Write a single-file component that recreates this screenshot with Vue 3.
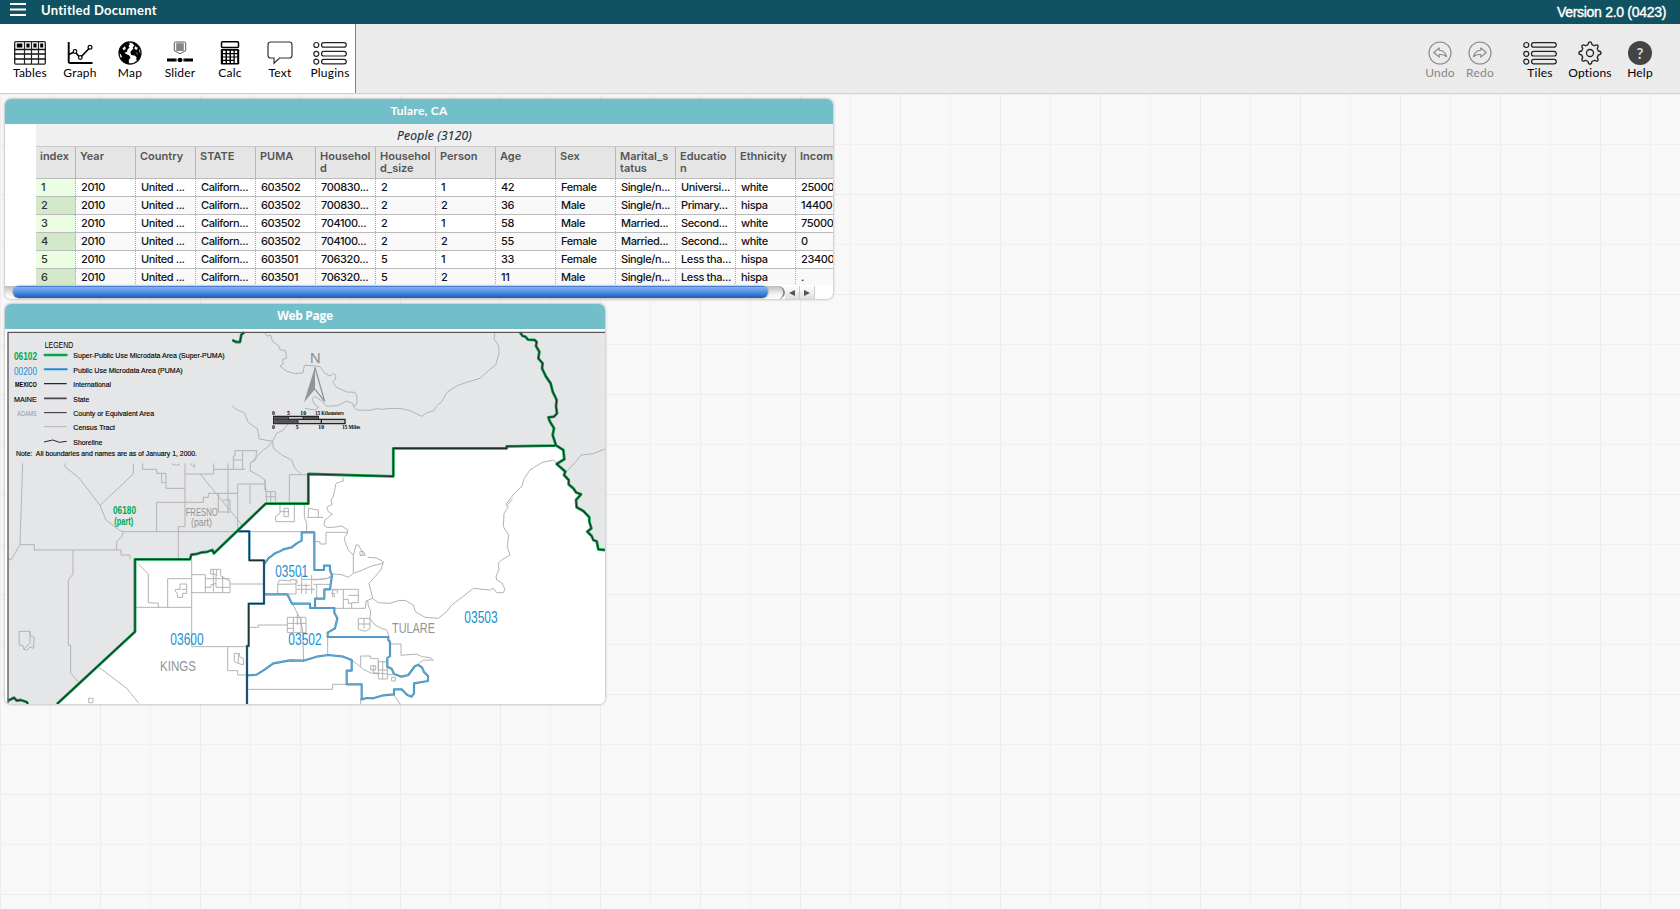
<script setup>
const columns = [
  'index', 'Year', 'Country', 'STATE', 'PUMA', 'Household', 'Household_size', 'Person',
  'Age', 'Sex', 'Marital_status', 'Education', 'Ethnicity', 'Income'
]
const rows = [
  ['1', '2010', 'United ...', 'Californ...', '603502', '700830...', '2', '1', '42', 'Female', 'Single/n...', 'Universi...', 'white', '25000'],
  ['2', '2010', 'United ...', 'Californ...', '603502', '700830...', '2', '2', '36', 'Male', 'Single/n...', 'Primary...', 'hispa', '14400'],
  ['3', '2010', 'United ...', 'Californ...', '603502', '704100...', '2', '1', '58', 'Male', 'Married...', 'Second...', 'white', '75000'],
  ['4', '2010', 'United ...', 'Californ...', '603502', '704100...', '2', '2', '55', 'Female', 'Married...', 'Second...', 'white', '0'],
  ['5', '2010', 'United ...', 'Californ...', '603501', '706320...', '5', '1', '33', 'Female', 'Single/n...', 'Less tha...', 'hispa', '23400'],
  ['6', '2010', 'United ...', 'Californ...', '603501', '706320...', '5', '2', '11', 'Male', 'Single/n...', 'Less tha...', 'hispa', '.']
]
const breaks = { Household: ['Househol', 'd'], Household_size: ['Househol', 'd_size'], Marital_status: ['Marital_s', 'tatus'], Education: ['Educatio', 'n'] }
const headLines = (c) => breaks[c] || [c]
const legend = [
  { y: 174, text: 'Super-Public Use Microdata Area (Super-PUMA)', w: 454 },
  { y: 218, text: 'Public Use Microdata Area (PUMA)', w: 328 },
  { y: 261, text: 'International', w: 113 },
  { y: 305, text: 'State', w: 48 },
  { y: 347, text: 'County or Equivalent Area', w: 242 },
  { y: 390, text: 'Census Tract', w: 125 },
  { y: 434, text: 'Shoreline', w: 87 }
]

const superPuma = 'M171 1212 405 995V778H570L574 764 590 762 606 757 620 756 637 750 642 760 797 611H925V522L1180 529V445H1520V439L1665 437' +
  'M1560 97 1568 108 1576 110 1584 119 1604 120 1610 126 1608 138 1618 155 1615 175 1628 190 1626 205 1638 230 1652 250 1658 275 1670 300 1668 318 1671 340 1662 350 1645 352 1650 365 1662 385 1658 405 1668 436' +
  ' 1690 450 1693 478 1683 484 1670 492 1685 505 1696 515 1692 525 1706 540 1706 553 1720 565 1728 577 1743 583 1728 600 1730 622 1750 633 1768 652 1768 665 1774 685 1762 695 1775 708 1780 720 1790 724 1795 748 1815 750' +
  'M733 97 724 104 720 126 708 126 697 120M24 1202 42 1193 50 1202 62 1200 80 1206 84 1212'
const county = 'M713 694H748V781H792V911H746V1038H741V1212'
const puma = 'M793 792 805 775 825 760 840 754 850 748 875 742 890 730 905 722V697H943V810H972V797H990V812L996 825 990 868H973V896H945V923' +
  'M792 883H862L876 911H930V924H1003V938L1012 955 1005 985 983 998V1011H1165V1020L1170 1026V1068L1162 1074V1100L1175 1106 1182 1122 1205 1130 1225 1125 1245 1098 1255 1095 1266 1102 1272 1116 1284 1128V1143L1242 1150V1180' +
  'L1235 1190 1222 1185 1205 1168H1182V1183L1150 1186 1120 1195 1100 1194 1085 1198V1153H1040V1112H1055V1080L1030 1070 985 1065 950 1070 910 1082 870 1081 820 1090 795 1108 770 1124 742 1126'
</script>

<template>
  <div class="app">
    <header class="topbar">
      <svg class="burger" width="16" height="14" viewBox="0 0 16 14"><path d="M0 1h16M0 6.500h16M0 12h16" stroke="#fff" stroke-width="1.800" /></svg>
      <span class="doc">Untitled Document</span>
      <span class="version">Version 2.0 (0423)</span>
    </header>

    <nav class="toolbar">
      <div class="tools">
        <div class="tool">
          <svg width="32" height="24" viewBox="0 0 32 24">
            <rect x=".7" y=".7" width="30.600" height="22.400" rx="1" fill="#fff" stroke="#222" stroke-width="1.300" />
            <path d="M.5 8.600h31M.5 13h31M.5 18h31" stroke="#111" stroke-width="1.500" />
            <path d="M10.500 1v22M17.500 1v22M24.500 1v22" stroke="#222" stroke-width="1.200" />
            <path d="M2.800 2.600h5.600v4H2.800zM12.400 2.600h3.200v4h-3.200zM19.400 2.600h3.200v4h-3.200zM26.200 2.600h3v4h-3z" fill="#000" />
          </svg>
          <span>Tables</span>
        </div>
        <div class="tool">
          <svg width="26" height="24" viewBox="0 0 26 24" fill="none" stroke="#000">
            <path d="M1.700 1v19.500q0 1.500 1.600 1.500H25.500" stroke-width="1.900" />
            <path d="M2 13.500 8 10.500 13 17 22.500 7" stroke-width="1.600" />
            <g fill="#fff" stroke-width="1.200"><circle cx="8" cy="10.500" r="1.800" /><circle cx="13.300" cy="16.500" r="1.800" /><circle cx="23" cy="6.300" r="1.900" /></g>
          </svg>
          <span>Graph</span>
        </div>
        <div class="tool">
          <svg width="24" height="24" viewBox="0 0 24 24">
            <circle cx="12" cy="12" r="11" fill="#fff" stroke="#111" stroke-width="1.300" />
            <path d="M4 4.500Q6.500 2 9.800 1.300L12 3l-1.500 2 1 1.500-2 2-.5 2.500-2.500.5L8 13l3 1.200 1.500 2L10.800 19l.2 4Q5 22.500 2.500 17L4 16l-1-2.500L1 12Q1 7.500 4 4.500z" fill="#000" />
            <path d="M13.500 1.200Q20 2 22.500 9l-1.500-.8.500 3 1.300 1.500Q22.500 17 19.500 20l-1.200-1 .2-3-2-1.500-3.300-.5L12.300 11l2-2.500 1.200-.2-.8-1.800 1.600-2z" fill="#000" />
            <path d="M17 5.500l2.500 1.300-.7 2-2-.8zM4.800 7.300 7 5.500l.5 2.300-1.700 1.500zM18.300 11.200l1.300 2.600M13 3.800l1.300.7-.8 2z" fill="#fff" stroke="#fff" stroke-width=".4" />
          </svg>
          <span>Map</span>
        </div>
        <div class="tool">
          <svg width="26" height="24" viewBox="0 0 26 24">
            <path d="M8.500 1h9q1.200 0 1.200 1.200v7.500L16.200 11l-3.200 1.700L9.800 11 7.300 9.700V2.200Q7.300 1 8.500 1z" fill="#fff" stroke="#555" stroke-width="1" />
            <rect x="9.200" y="2.200" width="7.600" height="7.800" fill="#858585" />
            <path d="M0 19h9.500M16.500 19H26" stroke="#000" stroke-width="2.800" /><path d="M8 19h10" stroke="#555" stroke-width=".8" />
            <circle cx="13" cy="19" r="2.300" fill="#000" />
          </svg>
          <span>Slider</span>
        </div>
        <div class="tool">
          <svg width="20" height="24" viewBox="0 0 20 24">
            <rect x="1.500" y=".8" width="17" height="5.600" rx="1" fill="#fff" stroke="#000" stroke-width="1.500" />
            <rect x=".8" y="8" width="18.400" height="15.500" rx="1.300" fill="#000" />
            <path d="M3 9.800h2.500v2.200H3zM7 9.800h2.500v2.200H7zM11 9.800h2.500v2.200H11zM14.800 9.800h2.400v2.200h-2.400zM3 13.200h2.500v2.200H3zM7 13.200h2.500v2.200H7zM11 13.200h2.500v2.200H11zM14.800 13.200h2.400v2.200h-2.400zM3 16.600h2.500v2.200H3zM7 16.600h2.500v2.200H7zM11 16.600h2.500v2.200H11zM14.800 16.600h2.400v5.300h-2.400zM3 19.900h2.500v2H3zM7 19.900h2.500v2H7zM11 19.900h2.500v2H11z" fill="#fff" />
          </svg>
          <span>Calc</span>
        </div>
        <div class="tool">
          <svg width="26" height="24" viewBox="0 0 26 24">
            <path d="M3.800 1H22.200Q25 1 25 3.800V14.200Q25 17 22.200 17H12.500L7 22.300V17H3.800Q1 17 1 14.200V3.800Q1 1 3.800 1z" fill="#fff" stroke="#333" stroke-width="1.200" />
          </svg>
          <span>Text</span>
        </div>
        <div class="tool">
          <svg width="34" height="24" viewBox="0 0 34 24" fill="none" stroke="#222" stroke-width="1.200">
            <circle cx="3.300" cy="4" r="2.500" /><circle cx="3.300" cy="12.800" r="2.500" /><circle cx="3.300" cy="20.600" r="2.500" />
            <rect x="8.500" y="1.600" width="24.800" height="4.600" rx="2.300" /><rect x="8.500" y="10.400" width="24.800" height="4.600" rx="2.300" /><rect x="8.500" y="18.300" width="24.800" height="4.600" rx="2.300" />
          </svg>
          <span>Plugins</span>
        </div>
      </div>
      <div class="actions">
        <div class="tool dim">
          <svg width="24" height="24" viewBox="0 0 24 24" fill="none" stroke="#888" stroke-width="1.100">
            <circle cx="12" cy="12" r="11" />
            <path d="M5.800 11.500 11.200 6.800v2.500q6 .3 7.300 6.500-2.500-2.800-7.300-2.200v2.600z" stroke-linejoin="round" />
          </svg>
          <span>Undo</span>
        </div>
        <div class="tool dim">
          <svg width="24" height="24" viewBox="0 0 24 24" fill="none" stroke="#888" stroke-width="1.100">
            <circle cx="12" cy="12" r="11" />
            <path d="M18.200 11.500 12.800 6.800v2.500q-6 .3-7.300 6.500 2.500-2.800 7.300-2.200v2.600z" stroke-linejoin="round" />
          </svg>
          <span>Redo</span>
        </div>
        <div class="tool gap">
          <svg width="34" height="24" viewBox="0 0 34 24" fill="none" stroke="#222" stroke-width="1.200">
            <circle cx="3.300" cy="4" r="2.500" /><circle cx="3.300" cy="12.800" r="2.500" /><circle cx="3.300" cy="20.600" r="2.500" />
            <rect x="8.500" y="1.600" width="24.800" height="4.600" rx="2.300" /><rect x="8.500" y="10.400" width="24.800" height="4.600" rx="2.300" /><rect x="8.500" y="18.300" width="24.800" height="4.600" rx="2.300" />
          </svg>
          <span>Tiles</span>
        </div>
        <div class="tool">
          <svg width="24" height="24" viewBox="0 0 24 24" fill="none" stroke="#222" stroke-width="1.300" stroke-linejoin="round">
            <path d="M10 3.700Q10.400.9 12 .9T14 3.700Q15 4 16.500 4.800 18.600 3.200 19.700 4.300T19.200 7.500Q20 9 20.300 10 23.100 10.400 23.100 12T20.300 14Q20 15 19.200 16.500 20.800 18.600 19.700 19.700T16.500 19.200Q15 20 14 20.300 13.600 23.100 12 23.100T10 20.300Q9 20 7.500 19.200 5.400 20.800 4.300 19.700T4.800 16.500Q4 15 3.700 14 .9 13.600.9 12T3.700 10Q4 9 4.800 7.500 3.200 5.400 4.300 4.300T7.500 4.800Q9 4 10 3.700z" />
            <circle cx="12" cy="12" r="3.500" />
          </svg>
          <span>Options</span>
        </div>
        <div class="tool">
          <div class="help">?</div>
          <span>Help</span>
        </div>
      </div>
    </nav>

    <main class="workspace">
      <section class="tile table-tile">
        <h2 class="title">Tulare, CA</h2>
        <div class="case">
          <div class="collection"><span>People (3120)</span></div>
          <div class="row head">
            <div v-for="c in columns" :key="c" class="cell"><div v-for="l in headLines(c)" :key="l">{{ l }}</div></div>
          </div>
          <div v-for="(r, i) in rows" :key="i" class="row data">
            <div v-for="(v, j) in r" :key="j" class="cell">{{ v }}</div>
          </div>
        </div>
        <div class="scroll">
          <div class="track"><div class="thumb"></div></div>
          <div class="arrow"><svg width="6" height="6" viewBox="0 0 6 6"><path d="M6 0v6L0 3z" fill="#555" /></svg></div>
          <div class="arrow"><svg width="6" height="6" viewBox="0 0 6 6"><path d="M0 0v6l6-3z" fill="#555" /></svg></div>
        </div>
      </section>

      <section class="tile web-tile">
        <h2 class="title web">Web Page</h2>
        <svg class="map" width="600" height="375" viewBox="15 87 1800 1125">
          <rect x="15" y="87" width="1800" height="1125" fill="#fff" />
          <rect x="24" y="96" width="1791" height="1116" fill="#e5e6e8" />
          <path fill="#fff" d="M171 1212 405 995V778H570L574 764 606 757 637 750 642 760 797 611H925V522L1180 529V445H1520V439L1665 437 1690 450 1693 478 1670 492 1696 515 1698 535 1720 565 1743 583 1728 600 1730 622 1750 633 1768 652 1774 685 1762 695 1790 720 1795 748 1815 750V1212z" />

          <g class="tract">
            <!-- northern rivers -->
            <path d="M793 97 802 108 812 106 818 125 836 137 840 149 856 152 860 175 847 178 850 192 840 198 860 214 887 221 909 218 913 196 937 197 960 200 975 220 990 228 1000 220 1008 226 1006 238 998 246 1010 262 1040 276 1065 277 1071 290 1070 314 1060 318 1058 310 1040 303 1012 317 980 319 965 302 943 289 937 296 942 312 956 322 945 330 915 325" />
            <path d="M1060 318 1070 330 1110 331 1130 326 1145 328 1170 325 1205 326 1230 332 1265 349 1280 338 1300 333 1310 318 1325 305 1340 278 1370 258 1400 247 1440 235 1465 212 1487 195 1497 160 1496 138 1482 117 1485 97" />
            <path d="M697 318 712 330 733 338 745 368 772 386 778 417 818 424M865 370 850 390 830 400 818 424 805 440 790 450 770 470 752 490 750 512 782 530 795 540 795 570M818 424 820 445 847 466 875 480 885 505 905 525" />
            <path d="M925 524H868V608M1815 447 1780 461 1743 465 1730 482 1700 515" />
            <!-- western grid -->
            <path d="M68 490 60 734 33 780 24 775M60 734H103V750H363V765H390V778M195 490V500L237 534 300 616 400 522V490M300 616 318 660 360 692 371 695 365 710 350 725V750M371 695H940M219 750V822L205 840V1036H212V1120L236 1147" />
            <path d="M428 490V508H470V520H498V565H555M485 520V548H498M470 695V607H610V592H625V580H712M555 490V680H535V776M555 522H641V490M640 508H736M684 490V640M600 522 727 676M655 580V636H690M713 695V552H795M750 555V612M795 540 797 575 826 575V605M797 560 800 605M812 575V605M797 590H826M700 508V468H705V452H770L767 480 750 490M728 452V508M700 480H727M515 492 530 496 540 492M570 490 583 502V490M670 600H690V630" />
            <path d="M57 994H90V1006L103 1012 100 1045 90 1040 82 1050 72 1048 68 1036H58zM90 994V1030L70 1048" />
            <!-- Kings -->
            <path d="M415 792 445 822V908L475 910V923M408 922H575M503 922V836H573M575 778V1040M575 824H616V878H575M616 878H690V843L662 828V808H632V822H648V862H690M640 808V875M616 862H632V855L648 850M650 808V828M668 828V878M616 836H690M690 852H790M526 868H540V852H560V880H548V892H532V880L526 875zM545 868H560M575 1040H745M683 1040V1112H713V1125H740M703 1060H718V1070L730 1075V1095L715 1090 703 1085zM715 1060V1090M297 1102 380 1165 417 1210M266 1194 280 1196 278 1208H266zM745 982H775V975H862M745 1168H998V1153H1040" />
            <!-- north Tulare -->
            <path d="M840 610V640L826 650 828 665H883V612M840 635H868M852 625H865V650H852zM913 612V652L920 668V695M920 652H970M925 625 955 630V653M925 625V650M1028 532 1030 543 1008 550 1000 590 993 600 996 613 980 622 985 635 997 642 975 660 972 676 980 682 1000 682 1025 678 1044 690 1040 705 1033 712 1035 725 1045 750 1060 766 1068 735 1075 735 1090 760 1080 768M1103 772 1130 774 1150 785 1148 790 1115 798 1080 813 1060 820 1045 832 1025 824 1000 822 980 836 940 840M1043 697H978V732H960V725H944M1060 766V820M1080 754H1090L1096 766H1080z" />
            <path d="M1150 787 1142 810 1127 828 1107 850 1118 895 1135 908 1170 910 1195 902 1215 901 1240 915 1246 935 1275 952 1315 955 1340 935 1355 915 1395 885 1420 865 1470 870 1480 865 1490 878 1510 878 1515 868 1505 848 1490 840 1488 828 1497 810 1495 790 1505 780 1530 765 1522 740 1526 705 1510 680 1512 640 1525 620 1518 613 1543 580 1565 560 1573 535 1590 510 1625 488 1660 480 1670 488M1538 596 1518 620" />
            <!-- Visalia -->
            <path d="M833 880V853L888 852M833 853 838 840 872 843V838L890 840 892 850M888 838V882H833M905 820V882M892 856H930M905 838H955L985 835 1000 825M935 825V882M890 868H945M918 850V882M950 852V898M940 853H990M990 868H1075V908H1055V925M1030 868V925M1045 886H1075M1030 898H1045V910H1055M993 880H1003V890H998V870H1012V880" />
            <path d="M878 912 900 955 908 990 911 1084M862 952H918V998H862zM862 970H918M880 952V998M892 938V975M903 952V998M862 985H880M983 1012V1065M1118 895 1098 903 1096 925H1005M1103 902 1105 918 1112 932 1110 955 1125 975 1145 985 1160 990 1168 1012M1075 955H1110V986L1095 994 1075 988zM1075 972H1092V986M1092 955V972H1110" />
            <path d="M1170 1032H1203V1066L1250 1062 1265 1070 1290 1073 1300 1080 1270 1080 1245 1100M1055 1080 1075 1095 1090 1108 1115 1120 1135 1122M1082 1100V1068H1112V1076H1135V1110M1112 1097H1127V1110H1112zM1135 1085H1162V1137H1135zM1135 1110H1162M1148 1085V1137M1120 1097V1118L1162 1122M1175 1132H1186V1143H1175zM1182 1185 1200 1212M1082 1195V1212M1162 1124H1180" />
          </g>

          <g fill="none" stroke-linejoin="round">
            <path class="puma" :d="puma" />
            <path class="puma-core" :d="puma" />
            <path class="puma deep" :d="county" />
            <path class="core" :d="county" />
            <path class="super" :d="superPuma" />
            <path class="core" :d="superPuma" />
            <path d="M1815 97H24V1212" stroke="#59555a" stroke-width="4" />
          </g>

          <!-- legend -->
          <g fill="none">
            <path d="M134 165H200" stroke="#00a94f" stroke-width="7" stroke-linecap="round" />
            <path d="M134 208H200" stroke="#1c8fd0" stroke-width="6" stroke-linecap="round" />
            <path d="M132 251H200" stroke="#2c2629" stroke-width="4" />
            <path d="M132 295H200" stroke="#4d464a" stroke-width="5" />
            <path d="M132 338H200" stroke="#2c2629" stroke-width="3" />
            <path d="M132 380H200" stroke="#b3b4b6" stroke-width="3" />
            <path d="M132 426 158 420 178 427 200 424" stroke="#2c2629" stroke-width="3" />
          </g>
          <g class="sans" font-size="21">
            <text x="134" y="143" font-size="26" textLength="86" lengthAdjust="spacingAndGlyphs">LEGEND</text>
            <text v-for="l in legend" :key="l.y" x="220" :y="l.y" :textLength="l.w" lengthAdjust="spacingAndGlyphs" class="strong">{{ l.text }}</text>
            <text x="48" y="467" textLength="543" lengthAdjust="spacingAndGlyphs" class="strong">Note:&nbsp; All boundaries and names are as of January 1, 2000.</text>
            <text x="42" y="180" font-size="31" font-weight="700" fill="#00a94f" textLength="69" lengthAdjust="spacingAndGlyphs">06102</text>
            <text x="42" y="225" font-size="31" fill="#1c8fd0" textLength="69" lengthAdjust="spacingAndGlyphs">00200</text>
            <text x="45" y="261" font-size="20" font-weight="700" textLength="65" lengthAdjust="spacingAndGlyphs">MEXICO</text>
            <text x="42" y="305" font-size="21" class="strong" textLength="68" lengthAdjust="spacingAndGlyphs">MAINE</text>
            <text x="52" y="347" font-size="20" fill="#96989b" textLength="58" lengthAdjust="spacingAndGlyphs">ADAMS</text>
          </g>

          <!-- compass and scale -->
          <text x="930" y="189" class="sans" font-size="46" fill="#8b8d90" textLength="32" lengthAdjust="spacingAndGlyphs">N</text>
          <path d="M945 200 912 307 945 268z" fill="#929497" />
          <path d="M945 202 974 304 945 268" fill="none" stroke="#929497" stroke-width="4" />
          <path d="M821 349H955V358H1035V371H821z" fill="#c6c6c8" stroke="#222" stroke-width="4" />
          <path d="M821 358H955M865 358V349M910 349V358M893 358V371M964 358V371" stroke="#222" stroke-width="4" fill="none" />
          <path d="M823 351H865V358H823zM823 359H892V370H823zM911 351H953V357H911z" fill="#555" />
          <g class="serif">
            <text x="816" y="345">0</text><text x="861" y="345">5</text><text x="901" y="345">10</text>
            <text x="946" y="345" textLength="86" lengthAdjust="spacingAndGlyphs">15 Kilometers</text>
            <text x="816" y="387">0</text><text x="887" y="387">5</text><text x="955" y="387">10</text>
            <text x="1027" y="387" textLength="54" lengthAdjust="spacingAndGlyphs">15 Miles</text>
          </g>

          <!-- area names -->
          <g class="sans narrow" font-size="48" fill="#1c8fd0">
            <text x="511" y="1036" textLength="100" lengthAdjust="spacingAndGlyphs">03600</text>
            <text x="826" y="832" textLength="98" lengthAdjust="spacingAndGlyphs">03501</text>
            <text x="865" y="1036" textLength="100" lengthAdjust="spacingAndGlyphs">03502</text>
            <text x="1393" y="970" textLength="100" lengthAdjust="spacingAndGlyphs">03503</text>
          </g>
          <g class="sans narrow" font-size="46" fill="#929497">
            <text x="480" y="1113" textLength="108" lengthAdjust="spacingAndGlyphs">KINGS</text>
            <text x="1176" y="999" textLength="129" lengthAdjust="spacingAndGlyphs">TULARE</text>
            <text x="557" y="648" font-size="30" textLength="96" lengthAdjust="spacingAndGlyphs">FRESNO</text>
            <text x="573" y="678" font-size="30" textLength="63" lengthAdjust="spacingAndGlyphs">(part)</text>
          </g>
          <g class="sans narrow" font-weight="700" fill="#00a94f">
            <text x="339" y="642" font-size="32" textLength="69" lengthAdjust="spacingAndGlyphs">06180</text>
            <text x="343" y="675" font-size="30" textLength="57" lengthAdjust="spacingAndGlyphs">(part)</text>
          </g>
        </svg>
      </section>
    </main>
  </div>
</template>

<style>
html, body { margin: 0; overflow: hidden; }
</style>

<style scoped>
.app { width: 1680px; height: 909px; overflow: hidden; display: flex; flex-direction: column; font-family: Lato, "Open Sans", sans-serif; color: #000; }
.topbar { height: 24px; flex: none; box-sizing: border-box; background: #105262; color: #fff; display: flex; align-items: flex-start; padding: 0 14px 0 10px; }
.burger { margin-top: 3px; }
.doc { margin-left: 15px; font: 700 13px/20px Lato, sans-serif; letter-spacing: .28px; }
.version { margin-left: auto; font: 400 14px/24px "Liberation Sans", sans-serif; -webkit-text-stroke: .4px #fff; letter-spacing: -.3px; }
.toolbar { height: 70px; flex: none; box-sizing: border-box; display: flex; justify-content: space-between; background: #ebebeb; border-bottom: 1px solid #d4d4d4; }
.tools { display: flex; width: 350px; padding-left: 5px; background: #fff; border-right: 1px solid #858585; }
.actions { display: flex; padding-right: 15px; }
.tool { width: 50px; padding-top: 17px; display: flex; flex-direction: column; align-items: center; font-size: 12px; line-height: 16px; letter-spacing: .2px; }
.tool svg { display: block; }
.dim { width: 40px; color: #888; }
.gap { margin-left: 15px; }
.help { width: 24px; height: 24px; border-radius: 50%; background: #444; color: #ddd; font: 700 15px/24px Lato, sans-serif; text-align: center; }
.workspace { flex: 1; box-sizing: border-box; padding: 5px; display: flex; flex-direction: column; align-items: flex-start; gap: 5px; background-color: #f8f8f8;
  background-image: linear-gradient(90deg, #ededed 1px, transparent 1px), linear-gradient(#ededed 1px, transparent 1px), linear-gradient(90deg, #f0f0f0 1px, transparent 1px), linear-gradient(#f0f0f0 1px, transparent 1px);
  background-size: 100px 100px, 100px 100px, 50px 50px, 50px 50px; }
.tile { border-radius: 6px; overflow: hidden; background: #fff; box-shadow: 0 0 3px rgba(0, 0, 0, .4); }
.table-tile { width: 828px; height: 200px; }
.web-tile { width: 600px; height: 400px; }
.title { margin: 0; height: 25px; background: #72bfca; color: #fff; text-align: center; font: 700 12px/24px Lato, sans-serif; letter-spacing: .25px; }
.title.web { font: 700 12px/23px "Open Sans", sans-serif; letter-spacing: -.3px; }
.case { margin-left: 31px; height: 161px; overflow: hidden; font-family: Inter, sans-serif; }
.collection { height: 22px; background: #f0f0f0; color: #16303c; font: italic 400 12px/24px "Open Sans", sans-serif; letter-spacing: .25px; text-align: center; -webkit-text-stroke: .2px currentColor; }
.row { display: grid; grid-template-columns: 40px repeat(13, 60px); width: 820px; box-sizing: border-box; }
.head { height: 33px; background: #e5e5e5; border-top: 1px solid #c9c9c9; border-bottom: 1px solid #bbb; color: #555; font-size: 11px; font-weight: 600; line-height: 12px; }
.head .cell { box-sizing: border-box; padding: 3px 0 0 4px; border-right: 1px solid #b8b8b8; overflow: hidden; white-space: nowrap; }
.data { height: 18px; border-bottom: 1px solid #bbb; font-size: 11px; font-weight: 500; line-height: 17px; color: #111; letter-spacing: -.38px; }
.data:nth-child(even) { background: #f9f9f9; }
.data .cell { box-sizing: border-box; padding-left: 5px; border-right: 1px dotted #aaa; white-space: nowrap; overflow: hidden; }
.data .cell:first-child { background: #ebfee2; color: #333; }
.data:nth-child(even) .cell:first-child { background: #d3e8c8; }
.scroll { height: 14px; display: flex; align-items: flex-start; }
.track { width: 780px; height: 13px; box-sizing: border-box; padding: 0 17px 0 8px; margin-top: 1px; background: linear-gradient(#bdbdbd, #f0f0f0 60%, #fff); border-right: 2px solid #888; border-radius: 0 8px 8px 0; }
.thumb { width: 755px; height: 12px; border-radius: 6px; background: linear-gradient(#2b63b8, #7bb0f2 12%, #5696e6 45%, #2b6cc4 85%, #2258a5); box-shadow: 0 0 2px #555; }
.arrow { width: 15px; height: 13px; box-sizing: border-box; margin-top: 1px; display: flex; align-items: center; justify-content: center; background: linear-gradient(#fff, #dedede); border-right: 1px solid #ccc; }
.map { display: block; }
.tract { fill: none; stroke: #b2b3b5; stroke-width: 3; }
.puma { stroke: #3a8fc0; stroke-width: 6.500; }
.puma-core { stroke: #86b4cc; stroke-width: 2; }
.puma.deep { stroke: #287db0; stroke-width: 7; }
.super { stroke: #0fa04c; stroke-width: 8.500; }
.core { stroke: #1d2f2b; stroke-width: 3.300; fill: none; }
.sans { font-family: "Liberation Sans", sans-serif; }
.narrow { font-family: "Liberation Sans Narrow", "Liberation Sans", sans-serif; }
.strong { stroke: #000; stroke-width: .4; }
.serif { font: 700 17px "Liberation Serif", serif; }
</style>
